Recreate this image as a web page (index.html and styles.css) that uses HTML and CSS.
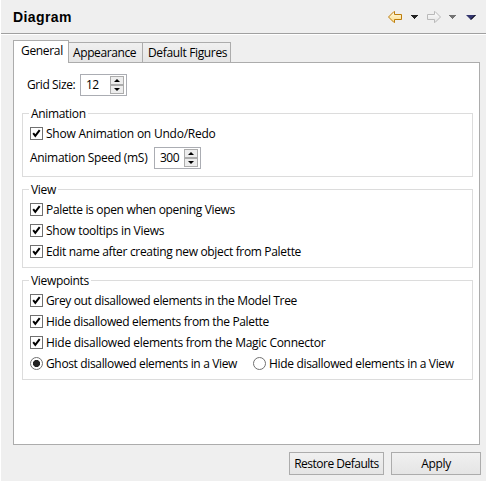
FILE: index.html
```html
<!DOCTYPE html>
<html lang="en">
<head>
<meta charset="utf-8">
<title>Diagram</title>
<link rel="stylesheet" href="styles.css">
</head>
<body>
<svg width="0" height="0" class="defs">
  <defs>
    <linearGradient id="gold" x1="0" y1="0" x2="0" y2="1"><stop offset="0" stop-color="#fffbe8"/><stop offset="1" stop-color="#fbdc85"/></linearGradient>
    <linearGradient id="silver" x1="0" y1="0" x2="0" y2="1"><stop offset="0" stop-color="#ffffff"/><stop offset="1" stop-color="#e2e2e2"/></linearGradient>
    <symbol id="check" viewBox="0 0 13 13"><path d="M3.2 6.2 5.3 8.9 9.7 3.2" fill="none" stroke="#000" stroke-width="2"/></symbol>
  </defs>
</svg>
<header class="header">
  <h1>Diagram</h1>
  <svg class="nav" width="91" height="18" viewBox="0 0 91 18">
    <path d="M1.500 9 7 3.500h.5v3h7v5h-7v3H7z" fill="url(#gold)" stroke="#bd7d0c"/>
    <path d="M24 7h7v1h-1v1h-1v1h-1v1h-1v-1h-1V9h-1V8h-1z" fill="#222"/>
    <path d="M53.500 9 48 3.500h-.5v3h-7v5h7v3h.5z" fill="url(#silver)" stroke="#b9b9b9"/>
    <path d="M62 7h7v1h-1v1h-1v1h-1v1h-1v-1h-1V9h-1V8h-1z" fill="#737373"/>
    <path d="M79 7h10L84 12z" fill="#34366f"/><path d="M88.500 7 84 11.500" stroke="#000"/>
  </svg>
</header>
<main class="content">
  <nav class="tabs">
    <span class="tab active">General</span>
    <span class="tab appearance">Appearance</span>
    <span class="tab figures">Default Figures</span>
  </nav>
  <section class="panel">
    <div class="field grid-size"><label>Grid Size:</label>
      <div class="spin"><span>12</span><div class="steps"><i class="up"></i><i class="down"></i></div></div>
    </div>
    <fieldset class="animation"><legend><span>Animation</span></legend>
      <label class="row"><svg class="box"><use href="#check"/></svg><span class="wide">Show Animation on Undo/Redo</span></label>
      <div class="field speed"><label>Animation Speed (mS)</label>
        <div class="spin"><span>300</span><div class="steps"><i class="up"></i><i class="down"></i></div></div>
      </div>
    </fieldset>
    <fieldset class="view"><legend><span>View</span></legend>
      <label class="row"><svg class="box"><use href="#check"/></svg><span>Palette is open when opening Views</span></label>
      <label class="row"><svg class="box"><use href="#check"/></svg><span class="tooltips">Show tooltips in Views</span></label>
      <label class="row"><svg class="box"><use href="#check"/></svg><span>Edit name after creating new object from Palette</span></label>
    </fieldset>
    <fieldset class="viewpoints"><legend><span>Viewpoints</span></legend>
      <label class="row"><svg class="box"><use href="#check"/></svg><span class="tight">Grey out disallowed elements in the Model Tree</span></label>
      <label class="row"><svg class="box"><use href="#check"/></svg><span class="tight">Hide disallowed elements from the Palette</span></label>
      <label class="row"><svg class="box"><use href="#check"/></svg><span class="connector">Hide disallowed elements from the Magic Connector</span></label>
      <div class="radios">
        <label class="row ghost"><i class="radio on"></i><span class="tight">Ghost disallowed elements in a View</span></label>
        <label class="row"><i class="radio"></i><span>Hide disallowed elements in a View</span></label>
      </div>
    </fieldset>
  </section>
  <footer class="actions">
    <button class="restore">Restore Defaults</button>
    <button class="apply">Apply</button>
  </footer>
</main>
</body>
</html>
```
FILE: styles.css
```css
* { box-sizing: border-box; }
body {
  margin: 0;
  width: 486px;
  height: 481px;
  overflow: hidden;
  border-left: 1px solid #fff;
  background: #efefef;
  color: #000;
  font: 12px/16px "Open Sans", "Noto Sans", sans-serif;
  letter-spacing: -0.33px;
  white-space: nowrap;
}
.defs { display: block; height: 0; }
.header {
  display: flex;
  justify-content: space-between;
  height: 34px;
  padding: 8px 8px 0 12px;
  border-bottom: 1px solid #a0a0a0;
  box-shadow: 0 1px #fff;
}
h1 {
  margin: 0;
  font: bold 14px/18px "Liberation Sans", sans-serif;
  letter-spacing: 0.4px;
}
.nav { display: block; }
.content { padding: 6px 5px 0 12px; }
.tabs { display: flex; align-items: flex-end; height: 22px; }
.tab {
  height: 20px;
  border: 1px solid #acacac;
  border-bottom: 0;
  background: linear-gradient(#f0f0f0, #e5e5e5);
  padding: 2px 0 0 4px;
}
.tab.active {
  z-index: 1;
  width: 56px;
  height: 23px;
  margin-bottom: -1px;
  padding: 2px 0 0 7px;
  background: #fff;
}
.appearance { width: 74px; border-left: 0; letter-spacing: -0.4px; }
.figures { width: 88px; border-left: 0; padding-left: 5px; letter-spacing: -0.35px; }
.panel {
  width: 467px;
  height: 383px;
  border: 1px solid #acacac;
  background: #fff;
  padding: 11px 7px 0 8px;
}
.field { display: flex; align-items: center; height: 22px; }
.grid-size { padding-left: 5px; }
.grid-size label { width: 53px; letter-spacing: -0.4px; }
.spin {
  display: flex;
  justify-content: space-between;
  width: 47px;
  height: 22px;
  padding: 1px;
  border: 1px solid #abadb3;
}
.spin span { padding: 1px 0 0 4px; letter-spacing: -0.5px; }
.steps { width: 15px; padding: 0 1px 0 0; }
.steps i {
  display: flex;
  align-items: center;
  justify-content: center;
  height: 9px;
  border: 1px solid #acacac;
  background: #ededed;
}
.steps i::before { content: ""; border: 3px solid transparent; }
.steps .up::before { border-top: 0; border-bottom-color: #000; }
.steps .down::before { border-bottom: 0; border-top-color: #000; }
fieldset {
  width: 451px;
  margin: 0;
  padding: 0 0 0 7px;
  border: 1px solid #dcdcdc;
}
legend { height: 16px; margin-left: -1px; padding: 0 2px; }
legend span { display: block; padding-top: 1px; }
.animation { height: 72px; margin-top: 9px; }
.view { height: 87px; margin-top: 4px; }
.viewpoints { height: 108px; margin-top: 4px; }
.row { display: flex; align-items: center; height: 21px; }
legend + .row { margin-top: 2px; }
.box {
  width: 13px;
  height: 13px;
  margin-right: 3px;
  outline: 1px solid #707070;
  outline-offset: -1px;
}
.wide { letter-spacing: -0.23px; }
.tooltips { letter-spacing: -0.28px; }
.tight { letter-spacing: -0.35px; }
.connector { letter-spacing: -0.27px; }
.speed { margin-top: 3px; }
.speed label { width: 124px; letter-spacing: -0.3px; }
.radios { display: flex; }
.ghost { width: 223px; }
.radio {
  width: 13px;
  height: 13px;
  margin-right: 3px;
  border: 1px solid #707070;
  border-radius: 50%;
}
.radio.on { background: radial-gradient(circle, #222 3.200px, #fff 3.900px); }
.actions { display: flex; justify-content: flex-end; gap: 7px; margin-top: 7px; }
button {
  height: 23px;
  padding: 0;
  border: 1px solid #acacac;
  background: linear-gradient(#f0f0f0, #e5e5e5);
  color: #000;
  font: inherit;
  letter-spacing: inherit;
}
.restore { width: 95px; letter-spacing: -0.5px; }
.apply { width: 90px; }
```
